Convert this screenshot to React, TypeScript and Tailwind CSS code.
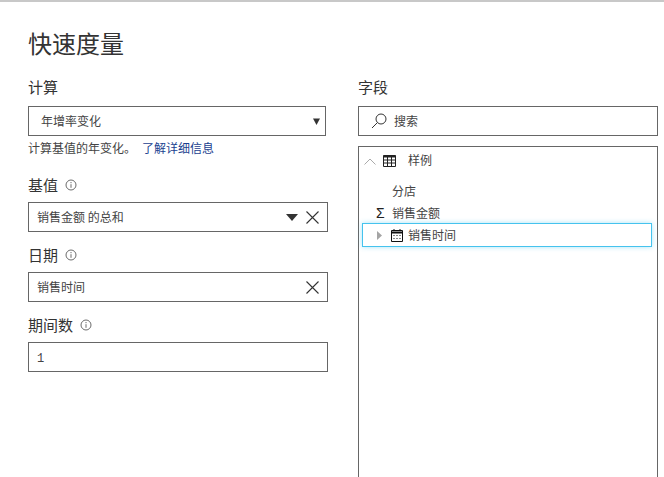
const font = "font-['Noto_Sans_CJK_SC','Noto_Sans',sans-serif]";

function InfoIcon() {
  return (
    <svg width="12" height="12" viewBox="0 0 12 12" className="ml-[7px] text-[#6b6b6b]">
      <circle cx="6" cy="6" r="5" fill="none" stroke="currentColor" strokeWidth="1" />
      <path d="M6 5.2v3.6M6 3v1.2" stroke="currentColor" strokeWidth="1" fill="none" />
    </svg>
  );
}

function CloseIcon() {
  return (
    <svg width="13" height="13" viewBox="0 0 13 13" className="text-[#333]">
      <path d="M.5.5l12 12M12.5.5l-12 12" stroke="currentColor" strokeWidth="1.1" fill="none" />
    </svg>
  );
}

function FieldLabel({ text }: { text: string }) {
  return (
    <div className="flex h-[20px] items-center text-[15px] leading-[20px] text-[#333]">
      {text}
      <InfoIcon />
    </div>
  );
}

function Box({ children, className = "" }: { children: React.ReactNode; className?: string }) {
  return (
    <div className={`flex h-[30px] items-center border border-[#666] bg-white text-[12px] text-[#444] ${className}`}>
      {children}
    </div>
  );
}

export default function App() {
  return (
    <div className={`${font} h-[477px] w-[664px] overflow-hidden bg-white`}>
      <div className="h-[2px] bg-[#c8c8c8]" />
      <h1 className="ml-[28px] mt-[26px] h-[30px] text-[24px] leading-[30px] font-normal text-[#333]">快速度量</h1>

      <div className="mt-[19px] flex pl-[28px]">
        <div className="w-[300px]">
          <div className="flex h-[20px] items-center text-[15px] text-[#333]">计算</div>
          <Box className="mt-[9px] w-[298px] pl-[12px] pr-[5px]">
            <span className="flex-1">年增率变化</span>
            <svg width="7" height="7" viewBox="0 0 8 8" className="text-[#333]">
              <path d="M0 .5h8L4 8z" fill="currentColor" />
            </svg>
          </Box>
          <div className="mt-[3px] flex h-[17px] items-center text-[12px] text-[#444]">
            计算基值的年变化。
            <span className="ml-[6px] text-[#1a3f8f]">了解详细信息</span>
          </div>

          <div className="mt-[19px]">
            <FieldLabel text="基值" />
          </div>
          <Box className="mt-[7px] pl-[8px] pr-[8px]">
            <span className="flex-1">销售金额 的总和</span>
            <svg width="12" height="7" viewBox="0 0 12 7" className="mr-[8px] text-[#333]">
              <path d="M0 0h12L6 7z" fill="currentColor" />
            </svg>
            <CloseIcon />
          </Box>

          <div className="mt-[13px]">
            <FieldLabel text="日期" />
          </div>
          <Box className="mt-[7px] pl-[8px] pr-[8px]">
            <span className="flex-1">销售时间</span>
            <CloseIcon />
          </Box>

          <div className="mt-[13px]">
            <FieldLabel text="期间数" />
          </div>
          <Box className="mt-[7px] pl-[8px] pt-[3px] font-['Liberation_Mono',monospace]">1</Box>
        </div>

        <div className="ml-[30px] w-[300px]">
          <div className="flex h-[20px] items-center text-[15px] text-[#333]">字段</div>
          <Box className="mt-[9px] pl-[12px] text-[#333]">
            <svg width="16" height="16" viewBox="0 0 16 16" className="mr-[7px] text-[#333]">
              <circle cx="10" cy="6" r="5" fill="none" stroke="currentColor" strokeWidth="1" />
              <path d="M6.4 9.6L1 15" stroke="currentColor" strokeWidth="1" fill="none" />
            </svg>
            搜索
          </Box>

          <div className="mt-[10px] h-[340px] border border-[#666] pl-[3px] pt-[4px] text-[12px] text-[#444]">
            <div className="flex h-[20px] items-center">
              <svg width="12" height="7" viewBox="0 0 12 7" className="ml-[2px] text-[#aaa]">
                <path d="M.5 6.5L6 1l5.5 5.5" fill="none" stroke="currentColor" strokeWidth="1" />
              </svg>
              <svg width="13" height="12" viewBox="0 0 13 12" className="ml-[7px] text-[#222]">
                <path d="M.5.5h12v11H.5z" fill="none" stroke="currentColor" />
                <path d="M.5 1.5h12" stroke="currentColor" strokeWidth="2" />
                <path d="M.5 5h12M.5 8h12M4.5 2v9M8.5 2v9" stroke="currentColor" />
              </svg>
              <span className="ml-[12px] -translate-y-[1px] text-[#444]">样例</span>
            </div>
            <div className="mt-[11px] flex h-[18px] items-center pl-[30px]">分店</div>
            <div className="mt-[4px] flex h-[18px] items-center pl-[14px]">
              <span className="w-[16px] font-['Liberation_Sans',sans-serif] text-[14px] leading-[18px] text-[#222]">Σ</span>
              销售金额
            </div>
            <div className="mt-[1px] flex h-[24px] w-[290px] items-center border border-[#45c3ee] bg-white pl-[14px] shadow-[0_0_5px_rgba(69,195,238,0.45)]">
              <svg width="5" height="9" viewBox="0 0 5 9" className="text-[#a5a5a5]">
                <path d="M0 0l5 4.5L0 9z" fill="currentColor" />
              </svg>
              <svg width="12" height="13" viewBox="0 0 12 13" className="ml-[9px] text-[#111]">
                <path d="M.5 1.5h11v11H.5z" fill="none" stroke="currentColor" />
                <path d="M.5 3.5h11" stroke="currentColor" strokeWidth="2" />
                <path d="M3 0v2M9 0v2" stroke="currentColor" />
                <path d="M2.5 6.5h1M5.5 6.5h1M8.5 6.5h1M2.5 9.5h1M5.5 9.5h1M8.5 9.5h1" stroke="currentColor" />
              </svg>
              <span className="ml-[5px]">销售时间</span>
            </div>
          </div>
        </div>
      </div>
    </div>
  );
}
